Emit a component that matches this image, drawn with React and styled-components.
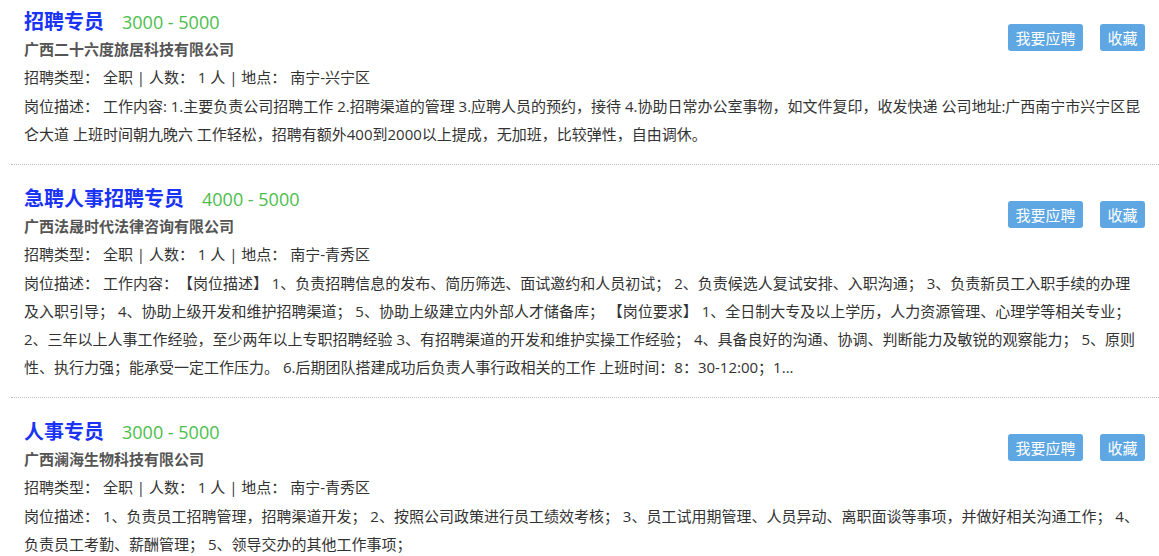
import React from "react";
import styled, { createGlobalStyle } from "styled-components";

const jobs = [
  {
    title: "招聘专员",
    salary: "3000 - 5000",
    company: "广西二十六度旅居科技有限公司",
    type: "全职",
    count: 1,
    place: "南宁-兴宁区",
    desc:
      "工作内容: 1.主要负责公司招聘工作 2.招聘渠道的管理 3.应聘人员的预约，接待 4.协助日常办公室事物，如文件复印，收发快递 公司地址:广西南宁市兴宁区昆仑大道 上班时间朝九晚六 工作轻松，招聘有额外400到2000以上提成，无加班，比较弹性，自由调休。",
  },
  {
    title: "急聘人事招聘专员",
    salary: "4000 - 5000",
    company: "广西法晟时代法律咨询有限公司",
    type: "全职",
    count: 1,
    place: "南宁-青秀区",
    desc:
      "工作内容：【岗位描述】 1、负责招聘信息的发布、简历筛选、面试邀约和人员初试； 2、负责候选人复试安排、入职沟通； 3、负责新员工入职手续的办理及入职引导； 4、协助上级开发和维护招聘渠道； 5、协助上级建立内外部人才储备库； 【岗位要求】 1、全日制大专及以上学历，人力资源管理、心理学等相关专业； 2、三年以上人事工作经验，至少两年以上专职招聘经验 3、有招聘渠道的开发和维护实操工作经验； 4、具备良好的沟通、协调、判断能力及敏锐的观察能力； 5、原则性、执行力强；能承受一定工作压力。 6.后期团队搭建成功后负责人事行政相关的工作 上班时间：8：30-12:00；1...",
  },
  {
    title: "人事专员",
    salary: "3000 - 5000",
    company: "广西澜海生物科技有限公司",
    type: "全职",
    count: 1,
    place: "南宁-青秀区",
    desc:
      "1、负责员工招聘管理，招聘渠道开发； 2、按照公司政策进行员工绩效考核； 3、员工试用期管理、人员异动、离职面谈等事项，并做好相关沟通工作； 4、负责员工考勤、薪酬管理； 5、领导交办的其他工作事项；",
  },
];

export default function App() {
  return (
    <>
      <GlobalStyle />
      <List>
        {jobs.map((job) => (
          <Item key={job.title}>
            <Head>
              <div>
                <TitleRow>
                  <Title>{job.title}</Title>
                  <Salary>{job.salary}</Salary>
                </TitleRow>
                <Company>{job.company}</Company>
                <Meta>
                  {`招聘类型： ${job.type} | 人数： ${job.count} 人 | 地点： ${job.place}`}
                </Meta>
              </div>
              <Actions>
                <ActionBtn type="button">我要应聘</ActionBtn>
                <ActionBtn type="button">收藏</ActionBtn>
              </Actions>
            </Head>
            <Desc>{`岗位描述： ${job.desc}`}</Desc>
          </Item>
        ))}
      </List>
    </>
  );
}

/* -------------------- Styled Components -------------------- */

const GlobalStyle = createGlobalStyle`
  html, body {
    margin: 0;
    padding: 0;
    background: #fff;
    overflow: hidden;
  }
  body {
    font-family: "Open Sans", "Noto Sans CJK SC", sans-serif;
    font-size: 15px;
    color: #333;
    text-spacing-trim: space-all;
  }
`;

const List = styled.div`
  margin-top: -12px;
`;

const Item = styled.div`
  margin-left: 11px;
  padding: 18px 14px 16px 13px;
  border-bottom: 1px dotted #bbb;
`;

const Head = styled.div`
  display: flex;
  justify-content: space-between;
  align-items: flex-start;
`;

const TitleRow = styled.div`
  display: flex;
  align-items: baseline;
  height: 29px;
`;

const Title = styled.span`
  font-size: 20px;
  font-weight: 700;
  color: #1a33f5;
`;

const Salary = styled.span`
  margin-left: 18px;
  font-size: 18px;
  color: #4cbd4c;
`;

const Company = styled.div`
  font-weight: 700;
  color: #555;
  line-height: 28px;
`;

const Meta = styled.div`
  line-height: 29px;
  color: #333;
`;

const Actions = styled.div`
  display: flex;
  gap: 17px;
  margin-top: 18px;
`;

const ActionBtn = styled.button`
  height: 27px;
  padding: 0 7.5px;
  border: none;
  border-radius: 3px;
  background: #5ea7e3;
  color: #fff;
  font-family: "Noto Sans CJK SC", sans-serif;
  font-size: 15px;
  line-height: 27px;
  cursor: pointer;
`;

const Desc = styled.p`
  margin: 0;
  line-height: 28px;
  color: #333;
`;
